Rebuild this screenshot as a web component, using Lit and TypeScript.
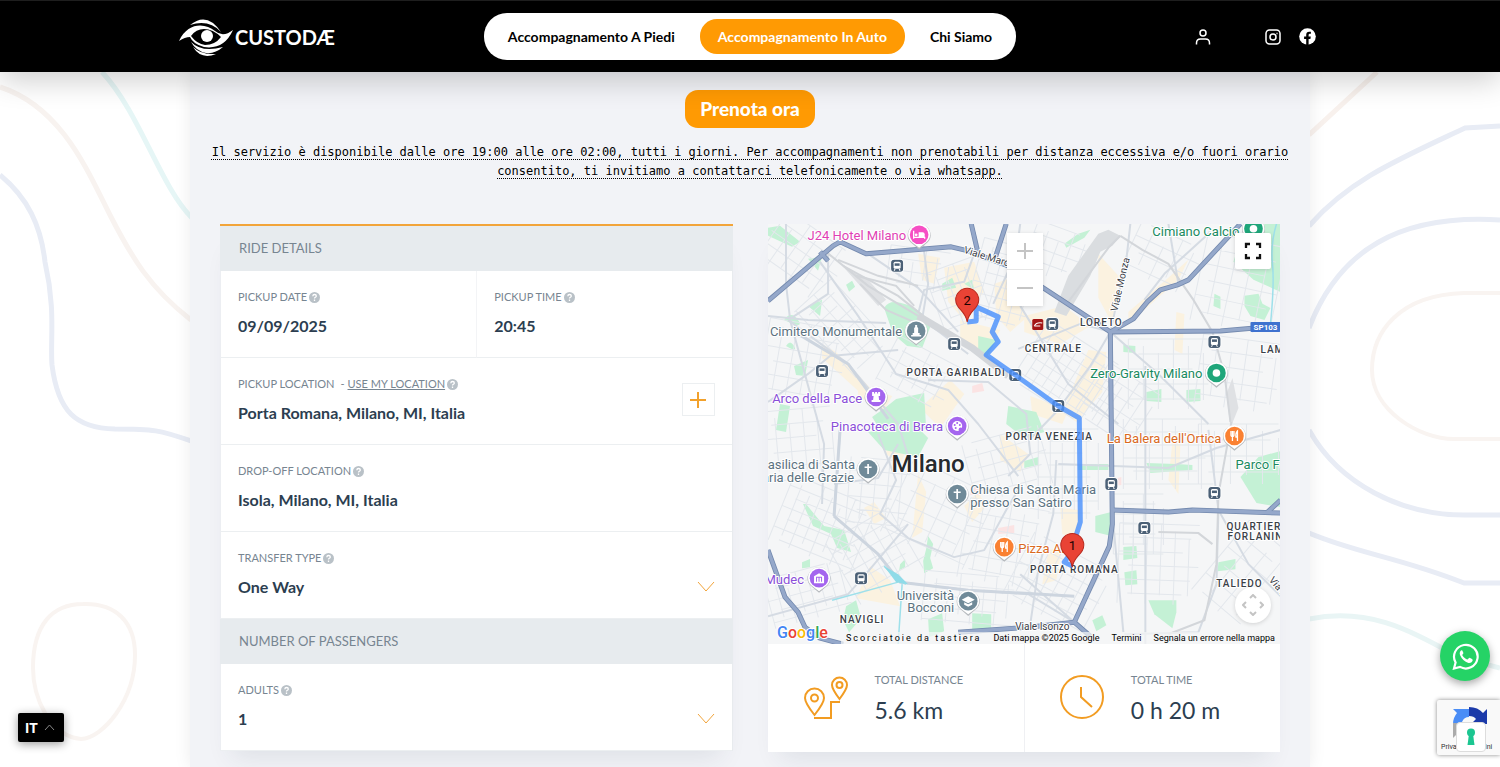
import { LitElement, html, svg, css } from "lit";
import { customElement } from "lit/decorators.js";

type Pt = [number, number];

/* Blocks of minor streets: centre x, centre y, width, height, rotation, spacing */
const STREET_BLOCKS: [number, number, number, number, number, number][] = [
  [30, 30, 90, 60, 35, 13], [35, 140, 80, 80, 10, 14], [75, 105, 90, 50, 48, 12],
  [30, 220, 70, 70, -5, 14], [55, 300, 90, 70, 22, 11], [110, 330, 80, 70, -30, 12],
  [40, 370, 80, 50, -15, 11], [150, 45, 60, 40, 8, 12], [190, 70, 50, 60, -20, 10],
  [235, 60, 60, 80, 15, 11], [290, 30, 60, 50, 20, 13], [300, 150, 90, 70, 33, 10],
  [350, 180, 60, 60, 33, 12], [400, 150, 80, 70, 0, 15], [470, 60, 80, 90, 12, 16],
  [395, 35, 70, 50, 25, 15], [470, 150, 80, 70, 8, 15], [400, 230, 90, 70, 0, 13],
  [470, 230, 80, 60, 0, 16], [300, 250, 60, 90, 0, 12], [240, 240, 80, 60, -15, 13],
  [170, 290, 90, 80, 25, 15], [235, 320, 80, 80, 10, 14], [290, 360, 90, 70, 28, 11],
  [390, 340, 80, 80, 2, 14], [200, 375, 90, 50, 5, 12], [370, 300, 50, 60, 0, 10],
  [110, 270, 60, 70, 5, 13], [475, 350, 60, 90, 40, 17], [150, 150, 70, 50, 28, 12],
];

const GREEN = [
  "M0 4 12 2 32 18 24 23 0 12Z", "M116 84q5-8 16-5l12 3 20 16-10 26-15-2-14-12Z",
  "M118 183l10-8 28-6 2 36-44 4-10-16Z", "M100 208l48-6 12 12-10 19-34-7Z",
  "M240 182l28 6 8 20-20 6-18-14Z", "M465 38l20 18 27 12V0h-16l-10 20-18 8Z",
  "M476 72l14-2 4 10 8 4-6 12-14-4-6-10Z", "M472 253l18-20 22-6v56l-24-4Z",
  "M310 240h30v6h-30ZM378 239l30 1 16 1v5l-42 3Z", "M327 292l16-4v24l-16-4Z",
  "M355 323l13-1 1 12-14 2ZM356 348l12-2 1 14-12 1Z", "M380 376h28v12l-4 16-18-14Z",
  "M160 312l5 8-3 14 3 10-9 5-1-12 3-12Z", "M38 280l18 22 20 4 7 22-14-4-6-14-18-8-10-22Z",
  "M160 395l14-6 2 18-15 6ZM204 389l19 1v16l-19-1Z", "M78 382l10-6 5 18-12 14-6-12Z",
  "M378 168l15-3v13l-15-1ZM418 166l14-1v12l-14 1Z", "M355 121l12 1v7l-12-1Z",
  "M450 338l17-3v10l-18 2ZM446 70l6 3v12l-7-3Z", "M210 112l18 4-10 18-8-4Z",
  "M40 35l14-2-4 14ZM40 82l14-6-2 16ZM78 61l6-4 3 6-6 5Z", "M26 142l14-6-3 16-9-1Z",
  "M16 96q7-10 14 0t-14 0ZM18 122q4-7 8 0t-8 0Z", "M12 180l10 2-4 26-10-2Z",
  "M174 60l10-6 4 10-14 3ZM196 60l8-4 2 10Z", "M296 20l14-10 12-4-6 8-18 10Z",
  "M132 340l5-5v8l-6 3ZM34 338l8-3v8l-8 1Z", "M324 396l10-5 4 10-10 6Z", "M256 237l14-4v8l-14 3Z",
];
const BEIGE = [
  "M150 30l22 4-6 26-12-4ZM176 44l30-6 10 30-22 26-14-16Z", "M192 96l40 10-16 28-24-20Z",
  "M54 120l14 8 38 40-8 6-44-40Z", "M90 160l34 12-8 14-26-14Z", "M152 184l30-28 14 14-24 34Z",
  "M226 60l18-6 14 40-16 14-14-16Z", "M256 92l40-10 26 20-30 18-36-12Z",
  "M330 30l20 22-6 48-14-26Z", "M360 88l40-34 20-18-10 20-50 44Z", "M320 126l18 2-4 40-26 30-14-10Z",
  "M262 172l38 14-6 14-30-10Z", "M408 88l8 2-2 40-8-4Z", "M404 218l8 2-2 50-10-14Z",
  "M232 210l28 20-8 18-20-12Z", "M150 250l8 18-4 40-10 6Z", "M96 284l10-6 12 16-12 6Z",
  "M102 342l20 14 10 26-44-8Z", "M196 282l14-14 8 14-14 16Z", "M292 284l20 2-4 30-14-6Z",
  "M280 326l14-4-6 34-14 4Z", "M120 208l20 14-8 18-14-10Z",
];
const MEDIUM = [
  "M0 92 40 96 118 99", "M20 96 80 140 130 200 140 232", "M52 38 90 92 128 150 180 166 210 200 250 252",
  "M72 206 66 292 110 330 132 358 200 366 260 370 306 398", "M0 178 40 150 62 132 130 126",
  "M18 0 18 60 22 95", "M60 28 60 70 22 95", "M155 20 160 60 154 95 200 130",
  "M225 80 248 30 252 0", "M342 108 322 142 288 188 262 215", "M342 108 312 100 250 125",
  "M342 108 390 150 440 200", "M342 108 358 36 362 0", "M376 76 396 50 440 10",
  "M377 142 377 420", "M252 82 300 160 350 200", "M110 210 128 256 112 290 140 314 186 333 216 326 238 286 252 262",
  "M288 236 285 290 270 346 262 400", "M252 350 306 398", "M345 300 355 408", "M0 392 80 370 96 352 140 300",
  "M290 240 400 244 448 224 512 206", "M160 156 220 158 258 190 262 230 240 252", "M66 260 110 254 130 220",
  "M22 96 56 220 54 280", "M440 206 450 286 448 360 430 408 356 410", "M450 286 480 340 512 372",
  "M208 24 196 58 156 66 150 90", "M400 0 410 60", "M100 30 150 64 190 108",
];
const RAIL = [
  "M58 28 100 62 150 92 204 124 240 150", "M70 36 110 52 150 62", "M75 42 130 72 155 92", "M88 52 128 62 146 82",
  "M92 60 118 86 150 100", "M352 12 374 26 400 40 425 76 444 108 456 150 462 198", "M352 12 340 24 300 78",
  "M463 198 450 270 448 340 436 396 400 410", "M390 308 430 309 444 320",
];
const MAJOR = [
  "M0 77 65 22 72 18 98 30 183 23 200 27 240 42 275 64 342 108", "M203 0 210 30", "M238 0 227 34", "M52 28 60 37",
  "M342 108 365 95 379 78 392 66 409 61 420 56 472 0", "M342 108 452 107 512 102",
  "M342 108 343 206 344 300 341 322 306 398 322 412", "M344 286 400 288 424 286 512 289",
  "M0 326 17 373 30 388 37 403 52 414 75 420", "M190 408 260 403 306 398", "M498 289 512 276",
];
const ROUTE = "M199 98 208 97 208 83 230 93 224 108 230 118 218 131 247 151 290 182 311 194 312 298 302 330 296 338 304 342";

const STATIONS: Pt[] = [
  [129, 42], [186, 120], [54, 147], [247, 151], [290, 182], [284, 100], [446, 118],
  [343, 260], [446, 269], [376, 304], [93, 354],
];

const POIS: [number, number, string, string][] = [
  [151, 11, "#f64fc4", "bed"], [148, 107, "#708a98", "tower"], [108, 173, "#a465ee", "rook"],
  [189, 202, "#a465ee", "palette"], [448, 149, "#1fa67a", "dot"], [485, 5, "#1fa67a", "dot"],
  [466, 212, "#fa8132", "fork"], [236, 323, "#fa8132", "fork"], [100, 245, "#708a98", "cross"],
  [189, 270, "#708a98", "cross"], [200, 377, "#708a98", "cap"], [51, 354, "#a465ee", "museum"],
];

const GLYPHS: Record<string, unknown> = {
  bed: svg`<path d="M-5.500-4v8M-5.500 2.500H5.500V4" fill="none" stroke="#fff" stroke-width="1.300"/><path d="M-.500-2.500H3.500q2 0 2 2v3h-6Z" fill="#fff"/><circle cx="-3" cy="0" r="1.400" fill="#fff"/>`,
  tower: svg`<path d="M-1-6h2v2l1 1v5h1.500v2H5v1.500H-5V4h1.500V2H-2v-5l1-1Z" fill="#fff"/>`,
  rook: svg`<path d="M-4-5h2v1.500h1V-5h2v1.500h1V-5h2v4H2.500L3 3h1.500v2h-9V3H-3l.5-4H-4Z" fill="#fff"/>`,
  palette: svg`<circle r="5" fill="#fff"/><g fill="#a465ee"><circle cx="-2.500" cy="-1" r="1"/><circle cx="0" cy="-3" r="1"/><circle cx="2.600" cy="-1" r="1"/><circle cx="-1.500" cy="2" r="1"/><circle cx="3.500" cy="3.500" r="2"/></g>`,
  dot: svg`<circle r="3.800" fill="#fff"/>`,
  fork: svg`<path d="M-3.500-5v4q0 1.500 1.500 1.500T-.500-1v-4M-2-5V5M3 5V-5Q1-3 1.500 1H3" fill="none" stroke="#fff" stroke-width="1.300"/>`,
  cross: svg`<path d="M0-5V5M-3.500-1.800h7" stroke="#fff" stroke-width="1.700"/>`,
  cap: svg`<path d="M0-5 6.500-1.500 0 2-6.500-1.500ZM-4 1v2.500L0 5.500l4-2V1L0 3Z" fill="#fff"/>`,
  museum: svg`<path d="M-5-2 0-5l5 3V5H-5Z" fill="#fff"/><path d="M-2.500 3.500V-1h5v4.500M0-1v4.500" fill="none" stroke="#a465ee"/>`,
};

type Label = [string, number, number, "start" | "middle" | "end", string];
const LABELS: Label[] = [
  ["J24 Hotel Milano", 138, 16, "end", "pink"], ["Cimiano Calcio", 471, 12, "end", "green"],
  ["Cimitero Monumentale", 134, 112, "end", "slate"], ["Arco della Pace", 94, 179, "end", "violet"],
  ["Pinacoteca di Brera", 175, 207, "end", "violet"], ["Zero-Gravity Milano", 434, 154, "end", "green"],
  ["La Balera dell'Ortica", 453, 219, "end", "orange"], ["Parco Forlanini", 467, 245, "start", "green"],
  ["Basilica di Santa", 87, 245, "end", "slate"], ["Maria delle Grazie", 86, 258, "end", "slate"],
  ["Chiesa di Santa Maria", 202, 270, "start", "slate"], ["presso San Satiro", 202, 283, "start", "slate"],
  ["Pizza AM", 250, 329, "start", "orange"], ["Mudec", 36, 360, "end", "violet"],
  ["Università", 186, 376, "end", "slate"], ["Bocconi", 186, 388, "end", "slate"],
  ["LORETO", 333, 102, "middle", "area"], ["CENTRALE", 285, 128, "middle", "area"],
  ["PORTA GARIBALDI", 188, 152, "middle", "area"], ["PORTA VENEZIA", 281, 216, "middle", "area"],
  ["PORTA ROMANA", 306, 349, "middle", "area"], ["NAVIGLI", 94, 399, "middle", "area"],
  ["LAMBRATE", 492, 129, "start", "area"], ["QUARTIERE", 458, 306, "start", "area"],
  ["FORLANINI", 459, 316, "start", "area"], ["TALIEDO", 471, 363, "middle", "area"],
  ["Milano", 160, 248, "middle", "city"], ["Viale Isonzo", 274, 406, "middle", "road"],
];

function streetBlock([cx, cy, w, h, a, step]: [number, number, number, number, number, number]) {
  let d = "";
  let i = 0;
  for (let x = -w / 2; x <= w / 2; x += step, i++) d += `M${x} ${-h / 2 + (i % 3) * 7}V${h / 2 - (i % 2) * 9}`;
  for (let y = -h / 2; y <= h / 2; y += step, i++) d += `M${-w / 2 + (i % 2) * 10} ${y}H${w / 2 - (i % 3) * 8}`;
  return svg`<path d=${d} transform=${`translate(${cx} ${cy}) rotate(${a})`}/>`;
}

@customElement("city-map")
export class CityMap extends LitElement {
  static styles = css`
    :host { display: block; position: relative; height: 420px; overflow: hidden; background: #f5f6f7; font-family: Roboto, sans-serif; }
    .canvas { display: block; width: 100%; height: 100%; }
    text { font: 400 13px Roboto, sans-serif; paint-order: stroke; stroke: #fff; stroke-width: 2px; stroke-linejoin: round; }
    .pink { fill: #e03fb4; } .green { fill: #1a8a5f; } .slate { fill: #5b7280; } .violet { fill: #8a4fd8; } .orange { fill: #d9691e; }
    .area { font-size: 10px; font-weight: 500; letter-spacing: 1px; fill: #3a4047; }
    .city { font-size: 24px; font-weight: 500; fill: #262a2e; }
    .road { font-size: 10px; fill: #3a4047; }
    .shield { font-size: 8px; font-weight: 700; fill: #fff; stroke: none; }
    .pin { font-size: 13px; fill: #1a0000; stroke: none; }
    .brand { font-size: 16px; font-weight: 500; }
    .b { fill: #4285f4; } .r { fill: #ea4335; } .y { fill: #fbbc05; } .g { fill: #34a853; }
    button { display: grid; place-items: center; margin: 0; padding: 0; border: 0; background: #fff; cursor: pointer; }
    .zoom { position: absolute; top: 9px; left: calc(50% - 17px); width: 36px; border-radius: 2px; background: #fff; box-shadow: 0 1px 4px rgba(0, 0, 0, 0.15); }
    .zoom button { width: 36px; height: 36px; }
    .zoom button + button { border-top: 1px solid #e6e6e6; height: 37px; }
    .full { position: absolute; top: 9px; right: 9px; width: 36px; height: 36px; border-radius: 2px; box-shadow: 0 1px 4px rgba(0, 0, 0, 0.15); }
    .pan { position: absolute; bottom: 21px; right: 9px; width: 36px; height: 36px; border-radius: 50%; box-shadow: 0 1px 4px rgba(0, 0, 0, 0.15); }
    .credits { position: absolute; right: 0; bottom: 0; display: flex; gap: 12px; padding: 0 5px; height: 12px; font-size: 9px; line-height: 12px; color: #000; white-space: nowrap; background: rgba(245, 246, 247, 0.7); }
    .credits a, .credits button { color: #000; background: none; font: inherit; text-decoration: none; }
    .credits .keys { letter-spacing: 2px; }
  `;

  render() {
    return html`
      <svg class="canvas" viewBox="0 0 512 420" preserveAspectRatio="xMidYMid slice" role="img" aria-label="Milano">
        <rect width="512" height="420" fill="#f5f6f7" />
        <g fill="#fbf2e0">${BEIGE.map((d) => svg`<path d=${d}/>`)}</g>
        <g fill="#c4f1d5">${GREEN.map((d) => svg`<path d=${d}/>`)}</g>
        <path d="M202 263h12v8h-12ZM204 162l10-3 2 8-12 2ZM230 304l16-3v8l-16 1ZM345 255l8-2v8l-8 1Z" fill="#fbe3e3" />
        <g fill="none" stroke="#e3e7ec" stroke-width="1">${STREET_BLOCKS.map(streetBlock)}</g>
        <g fill="none" stroke="#d5dbe3" stroke-width="2" stroke-linejoin="round">${MEDIUM.map((d) => svg`<path d=${d}/>`)}</g>
        <path d="M66 292 110 330 132 358 200 366 306 372M72 206 66 292M30 110 80 140 120 195" fill="none" stroke="#cdd5df" stroke-width="3" stroke-linejoin="round" />
        <path d="M286 88 300 52 330 10 340 6 352 12 344 22 332 28 322 52 298 92Z" fill="#dadde0" />
        <path d="M76 44 100 56 118 76 110 82ZM458 170l6-16 6 30-8 20Z" fill="#dfe1e4" />
        <g fill="none" stroke="#d3d6da" stroke-width="2">${RAIL.map((d) => svg`<path d=${d}/>`)}</g>
        <path d="M150 92 204 124 240 152" fill="none" stroke="#d3d6da" stroke-width="7" />
        <path d="M116 342 132 358 138 360M508 0q-6 20-4 40t-2 60M134 360l-4 60M64 376l66-18" fill="none" stroke="#9ee0ea" stroke-width="1.500" />
        <path d="M116 342 128 358 140 360 130 350Z" fill="#8fdbe8" />
        <g fill="none" stroke="#7389ae" stroke-width="5" stroke-linejoin="round">${MAJOR.map((d) => svg`<path d=${d}/>`)}</g>
        <g fill="none" stroke="#95a8ca" stroke-width="3.400" stroke-linejoin="round">${MAJOR.map((d) => svg`<path d=${d}/>`)}</g>
        ${STATIONS.map(([x, y]) => svg`<g transform=${`translate(${x} ${y})`}>
          <rect x="-6.500" y="-6.500" width="13" height="13" rx="3.500" fill="#4b6076" stroke="#fff"/>
          <rect x="-3.500" y="-4" width="7" height="7" rx="1.500" fill="#fff"/>
          <path d="M-2.500-2.500h5v2.500h-5Z" fill="#4b6076"/><path d="M-3 4.800l1-1.500M3 4.800 2 3.300" stroke="#fff" stroke-width="1"/></g>`)}
        <rect x="264" y="95" width="11" height="11" rx="1.500" fill="#a31515" />
        <path d="M266 102q2-4 8-3M266 102h6" stroke="#fff" fill="none" />
        ${LABELS.map(([t, x, y, a, c]) => svg`<text x=${x} y=${y} text-anchor=${a} class=${c}>${t}</text>`)}
        <text class="road" transform="translate(195 29) rotate(17)">Viale Marche</text>
        <text class="road" transform="translate(349 88) rotate(-77)">Viale Monza</text>
        <text class="road" transform="translate(500 356) rotate(50)">Via Mecenate</text>
        ${POIS.map(([x, y, c, k]) => svg`<g transform=${`translate(${x} ${y})`}>
          <path d="M-11.500 0a11.500 11.500 0 1 1 23 0q0 5-5 8.500L0 14-6.500 8.500Q-11.500 5-11.500 0Z" fill="#b5b9bd" transform="translate(0 .7)"/>
          <path d="M-11 0a11 11 0 1 1 22 0q0 5-5 8.500L0 13-6 8.500Q-11 5-11 0Z" fill="#fff"/>
          <circle r="9.300" fill=${c}/>${GLYPHS[k]}</g>`)}
        <rect x="482" y="98" width="30" height="10" rx="1" fill="#3f72cf" />
        <text class="shield" x="497" y="106" text-anchor="middle">SP103</text>
        <path d=${ROUTE} fill="none" stroke="#4a90fb" stroke-opacity=".82" stroke-width="5" stroke-linejoin="round" />
        ${([[199, 98, "2"], [304, 343, "1"]] as [number, number, string][]).map(([x, y, n]) => svg`<g transform=${`translate(${x} ${y})`}>
          <path d="M0 0q-1-6-6-11.500Q-11.500-16.500-11.500-22a11.500 11.500 0 0 1 23 0q0 5.500-5.500 10.500Q1-6 0 0Z" fill="#e94335" stroke="#b8291d"/>
          <text class="pin" x="0" y="-17" text-anchor="middle">${n}</text></g>`)}
        <text class="brand" x="9" y="414"><tspan class="b">G</tspan><tspan class="r">o</tspan><tspan class="y">o</tspan><tspan class="b">g</tspan><tspan class="g">l</tspan><tspan class="r">e</tspan></text>
      </svg>
      <div class="zoom">
        <button aria-label="Zoom avanti"><svg width="16" height="16"><path d="M8 0v16M0 8h16" stroke="#c4c4c4" stroke-width="2" /></svg></button>
        <button aria-label="Zoom indietro"><svg width="16" height="16"><path d="M0 8h16" stroke="#c4c4c4" stroke-width="2" /></svg></button>
      </div>
      <button class="full" aria-label="Schermo intero"><svg width="18" height="18"><path d="M2 6V2h4M12 2h4v4M16 12v4h-4M6 16H2v-4" fill="none" stroke="#111" stroke-width="2.300" /></svg></button>
      <button class="pan" aria-label="Sposta"><svg width="22" height="22"><path d="M8 4l3-3 3 3M8 18l3 3 3-3M4 8l-3 3 3 3M18 8l3 3-3 3" fill="none" stroke="#c4c4c4" stroke-width="2" /></svg></button>
      <div class="credits">
        <button class="keys">Scorciatoie da tastiera</button><span>Dati mappa ©2025 Google</span>
        <a href="#terms">Termini</a><a href="#report">Segnala un errore nella mappa</a>
      </div>
    `;
  }
}

@customElement("app-root")
export class AppRoot extends LitElement {
  static styles = css`
    :host { display: block; position: relative; min-height: 100vh; overflow: hidden; background: #fff; color: #2c3e50; font-family: Lato, sans-serif; }
    * { box-sizing: border-box; }
    a { color: inherit; text-decoration: none; }
    .waves { position: absolute; top: 0; width: 191px; height: 767px; }
    .waves.left { left: 0; }
    .waves.right { right: 0; }
    header { position: relative; z-index: 2; height: 72px; background: #000; border-top: 1px solid #1e1e1e; box-shadow: 0 8px 30px rgba(0, 0, 0, 0.2); color: #fff; }
    .bar { display: grid; grid-template-columns: 1fr auto 1fr; align-items: center; height: 71px; max-width: 1144px; margin: 0 auto; }
    .logo { display: flex; align-items: center; gap: 1px; font: 700 20px Lato, sans-serif; }
    nav { display: flex; gap: 7px; padding: 6px; border-radius: 23px; background: #fff; }
    nav a { padding: 0 18px; border-radius: 17px; font: 700 14px/35px Lato, sans-serif; color: #000; white-space: nowrap; }
    nav a.on { background: #ff9a03; color: #fff; }
    .social { display: flex; justify-content: flex-end; align-items: center; gap: 18px; padding-right: 6px; }
    .social a { display: flex; }
    .social .user { margin-right: 36px; }
    main { position: relative; display: flex; flex-direction: column; align-items: center; max-width: 1120px; min-height: calc(100vh - 72px); margin: 0 auto; padding: 18px 30px 15px; background: #f2f3f7; box-shadow: 0 0 16px rgba(0, 0, 0, 0.08); }
    h1 { margin: 0; padding: 0 15px; border-radius: 13px; background: #ff9a03; color: #fff; font: 900 19px/38px Lato, sans-serif; }
    .notice { align-self: stretch; margin: 15px -15px 0; text-align: center; color: #000; font: 400 12px/19px "DejaVu Sans Mono", monospace; text-decoration: underline dotted 1px; text-underline-offset: 3px; }
    .cols { align-self: stretch; display: grid; grid-template-columns: 1fr 1fr; gap: 35px; margin-top: 43px; align-items: start; }
    .card { background: #fff; box-shadow: 0 18px 24px -12px rgba(44, 62, 80, 0.1); }
    .form { border-right: 1px solid #e8ebee; border-left: 1px solid #eceef2; }
    h2 { margin: 0 -1px; height: 45px; padding: 0 19px; font: 400 13px/45px Lato, sans-serif; color: #778591; background: #e7ebee; }
    h2.first { height: 47px; border-top: 2px solid #f2a43a; }
    .pair { display: grid; grid-template-columns: 1fr 1fr; }
    .pair .cell + .cell { border-left: 1px solid #f3f4f6; }
    .cell { position: relative; height: 87px; padding: 18px 17px 0; border-bottom: 1px solid #eceff1; }
    .cap { display: flex; align-items: center; gap: 2px; height: 16px; font-size: 11px; line-height: 16px; color: #778591; white-space: nowrap; }
    .cap a { text-decoration: underline; }
    .cap .dash { margin: 0 1px 0 4px; }
    .field { display: block; width: 100%; height: 24px; margin: 9px 0 0; padding: 0; border: 0; outline: 0; background: none; color: #2c3e50; font: 700 16px/24px Lato, sans-serif; }
    select.field { appearance: none; }
    .chev { position: absolute; right: 17px; top: 49px; pointer-events: none; }
    .plus { position: absolute; right: 17px; top: 25px; display: grid; place-items: center; width: 33px; height: 33px; padding: 0; border: 1px solid #eceff1; background: #fff; }
    .stats { display: grid; grid-template-columns: 1fr 1fr; }
    .stat { display: flex; gap: 27px; height: 108px; padding: 28px 0 0 36px; }
    .stat + .stat { border-left: 1px solid #eff0f3; padding-left: 35px; }
    .stat .cap { display: block; }
    .num { margin-top: 6px; font-size: 23px; line-height: 32px; white-space: nowrap; }
    .lang { position: absolute; z-index: 3; left: 18px; bottom: 25px; display: flex; align-items: center; gap: 6px; width: 46px; height: 29px; padding: 0 7px; border: 0; border-radius: 2px; background: #000; color: #fff; font: 900 14px Lato, sans-serif; box-shadow: 0 2px 10px rgba(0, 0, 0, 0.4); }
    .wa { position: absolute; z-index: 3; right: 10px; bottom: 86px; display: grid; place-items: center; width: 50px; height: 50px; border-radius: 50%; background: #25d366; box-shadow: 0 3px 8px rgba(0, 0, 0, 0.35); }
    .captcha { position: absolute; z-index: 3; right: 0; bottom: 12px; width: 63px; height: 55px; overflow: hidden; border-radius: 2px 0 0 2px; background: #f9f9f9; box-shadow: 0 0 4px #888; }
    .captcha svg { display: block; margin: 6px 0 0 15px; }
    .captcha span { display: block; padding-left: 4px; font: 7px/10px Roboto, sans-serif; color: #333; white-space: nowrap; }
    .consent { position: absolute; z-index: 4; right: 14px; bottom: 15px; display: grid; place-items: center; width: 30px; height: 30px; padding: 0; border: 1px solid #ddd; border-radius: 4px; background: #fff; }
  `;

  private help() {
    return html`<svg width="11" height="11" viewBox="0 0 11 11" aria-hidden="true"><circle cx="5.500" cy="5.500" r="5.500" fill="#b9c1c7" /><path d="M3.800 4.200q.1-1.700 1.800-1.700t1.700 1.500q0 .8-.9 1.300t-.9 1.200M5.500 7.600v1.300" fill="none" stroke="#fff" stroke-width="1.300" /></svg>`;
  }

  private chevron() {
    return html`<svg class="chev" width="18" height="11" aria-hidden="true"><path d="M1 1l8 9 8-9" fill="none" stroke="#f2a43a" stroke-width="1" /></svg>`;
  }

  private text(id: string, label: string, value: string, extra: unknown = null, action: unknown = null) {
    return html`<div class="cell"><div class="cap"><label for=${id}>${label}</label>${extra}${this.help()}</div>
      <input class="field" id=${id} type="text" .value=${value} />${action}</div>`;
  }

  private choice(id: string, label: string, options: string[]) {
    return html`<div class="cell"><div class="cap"><label for=${id}>${label}</label>${this.help()}</div>
      <select class="field" id=${id}>${options.map((o) => html`<option>${o}</option>`)}</select>${this.chevron()}</div>`;
  }

  render() {
    return html`
      <svg class="waves left" viewBox="0 0 191 767" fill="none" stroke-width="5" aria-hidden="true">
        <path stroke="#e6f6f6" d="M102 72C140 113 160 186 192 218" />
        <path stroke="#f8f3f0" d="M0 87C62 107 88 172 110 215S150 288 191 320" />
        <path stroke="#e8ecf5" d="M0 175C28 198 41 226 45 262 56 310 50 340 52 365 58 412 76 428 115 429 153 429 160 430 191 441" />
        <path stroke="#f9f4f1" stroke-width="4" d="M83 604C116 603 135 622 135 655 135 700 103 738 81 739 50 736 33 698 33 668 33 625 52 604 83 604Z" />
      </svg>
      <svg class="waves right" viewBox="0 0 191 767" fill="none" stroke-width="5" aria-hidden="true">
        <path stroke="#f8f1ed" d="M0 135 68 72" />
        <path stroke="#e8ecf5" d="M0 226C40 180 88 160 156 128L191 126M0 328C30 250 90 214 191 220M0 430C30 484 92 515 155 515H191M0 533C50 554 90 557 155 583H191" />
        <path stroke="#f9f4f1" stroke-width="4" d="M191 293H155C90 295 63 332 63 370 63 410 110 439 145 439H191" />
        <path stroke="#e9f5f5" d="M0 619C60 607 100 630 150 657L191 668" />
      </svg>
      <header>
        <div class="bar">
          <a class="logo" href="#home">
            <svg width="56" height="40" viewBox="0 0 56 40" fill="#fff" aria-hidden="true">
              <path fill-rule="evenodd" d="M1 24C10 5 27 6 37 14q8 7 18-1-9 20-29 17Q15 27 12 20q-5 0-11 4ZM13 19q6 8 14 9 10 0 16-8-8-8-17-8-8 0-13 7Z" />
              <circle cx="29" cy="19" r="6" />
              <path d="M12 8Q29-6 43 15 31 2 12 8ZM13 25q11 11 32 5-8 7-17 6-10-2-15-11ZM15 30q8 8 23 7-15 6-23-7Z" />
            </svg><span>CUSTODÆ</span>
          </a>
          <nav><a href="#piedi">Accompagnamento A Piedi</a><a class="on" href="#auto">Accompagnamento In Auto</a><a href="#chi">Chi Siamo</a></nav>
          <div class="social">
            <a class="user" href="#account" aria-label="Account"><svg width="16" height="16" fill="none" stroke="#fff" stroke-width="1.500"><circle cx="8" cy="4" r="3" /><path d="M1.500 15.500v-1.500q0-4 4-4h5q4 0 4 4v1.500" /></svg></a>
            <a href="#instagram" aria-label="Instagram"><svg width="16" height="16" fill="none" stroke="#fff" stroke-width="1.500"><rect x="1" y="1" width="14" height="14" rx="3.500" /><circle cx="8" cy="8" r="3" /><path d="M11.500 4.500h1" /></svg></a>
            <a href="#facebook" aria-label="Facebook"><svg width="17" height="17" viewBox="0 0 17 17"><circle cx="8.500" cy="8.500" r="8.300" fill="#fff" /><path d="M7.200 17v-6H5.100V8.600h2.100V6.800q0-3.100 3-3.100l1.700.1v2h-1.100q-1.200 0-1.200 1.200v1.600h2.200L11.400 11H9.600v6Z" fill="#000" /></svg></a>
          </div>
        </div>
      </header>
      <main>
        <h1>Prenota ora</h1>
        <p class="notice">Il servizio è disponibile dalle ore 19:00 alle ore 02:00, tutti i giorni. Per accompagnamenti non prenotabili per distanza eccessiva e/o fuori orario consentito, ti invitiamo a contattarci telefonicamente o via whatsapp.</p>
        <div class="cols">
          <form class="card form">
            <h2 class="first">RIDE DETAILS</h2>
            <div class="pair">${this.text("date", "PICKUP DATE", "09/09/2025")}${this.text("time", "PICKUP TIME", "20:45")}</div>
            ${this.text("from", "PICKUP LOCATION", "Porta Romana, Milano, MI, Italia",
              html`<span class="dash">-</span><a href="#locate">USE MY LOCATION</a>`,
              html`<button class="plus" type="button" aria-label="Add stop"><svg width="16" height="16"><path d="M8 0v16M0 8h16" stroke="#f2a12c" stroke-width="2" /></svg></button>`)}
            ${this.text("to", "DROP-OFF LOCATION", "Isola, Milano, MI, Italia")}
            ${this.choice("type", "TRANSFER TYPE", ["One Way", "Return"])}
            <h2>NUMBER OF PASSENGERS</h2>
            ${this.choice("adults", "ADULTS", ["1", "2", "3"])}
          </form>
          <section class="card">
            <city-map></city-map>
            <div class="stats">
              <div class="stat">
                <svg width="44" height="48" viewBox="0 0 44 48" fill="none" stroke="#f29c22" stroke-width="2"><path d="M10.500 43Q1 31 1 26a9.500 9.500 0 0 1 19 0q0 5-9.500 17ZM35.500 27Q28 17 28 13a7.500 7.500 0 0 1 15 0q0 4-7.500 14Z" /><circle cx="10.500" cy="26" r="3.500" /><circle cx="35.500" cy="13" r="3" /><path d="M10 46h17V30h9" /></svg>
                <div><div class="cap">TOTAL DISTANCE</div><div class="num">5.6 km</div></div>
              </div>
              <div class="stat">
                <svg width="44" height="48" viewBox="0 0 44 48" fill="none" stroke="#f29c22" stroke-width="2"><circle cx="22" cy="25" r="21" /><path d="M21 15v10l11 10" /></svg>
                <div><div class="cap">TOTAL TIME</div><div class="num">0 h 20 m</div></div>
              </div>
            </div>
          </section>
        </div>
      </main>
      <button class="lang">IT<svg width="11" height="7"><path d="M1 6l4.500-5L10 6" fill="none" stroke="#888" /></svg></button>
      <a class="wa" href="#whatsapp" aria-label="WhatsApp"><svg width="27" height="27" viewBox="0 0 27 27"><path d="M2 25.500 3.600 19.500A11.800 11.800 0 1 1 8 23.900Z" fill="none" stroke="#fff" stroke-width="2.200" /><path d="M9.500 7.300q-2.500 1.500-1.500 4.700 2.500 6 8.500 8 3.500.3 4.300-3 0-.8-3.200-2.200-.6-.2-1.800 1.500-.5.400-2.500-.8-2-1.300-3-3.300-.1-.5 1-1.800.3-.5-1-3-.3-.4-.8-.1Z" fill="#fff" /></svg></a>
      <div class="captcha">
        <svg width="36" height="36" viewBox="0 0 36 36"><path d="M1 18A17 17 0 0 1 5 7L1 3h16v8q-5 0-7 5Z" fill="#4a8df6" /><path d="M17 1q9 0 14 6l4-4v15H19l5-5q-2-3-7-3Z" fill="#1c3aa9" /><path d="M1 17v15l4-4q5 6 13 6v-8q-5 0-7-3l4-6Z" fill="#ababab" /></svg>
        <span>Privacy - Termini</span>
      </div>
      <button class="consent" aria-label="Consenso"><svg width="10" height="18" viewBox="0 0 10 18"><circle cx="5" cy="4.500" r="4" fill="#1cc691" /><path d="M3 6h4l1.500 11h-7Z" fill="#1cc691" /></svg></button>
    `;
  }
}
